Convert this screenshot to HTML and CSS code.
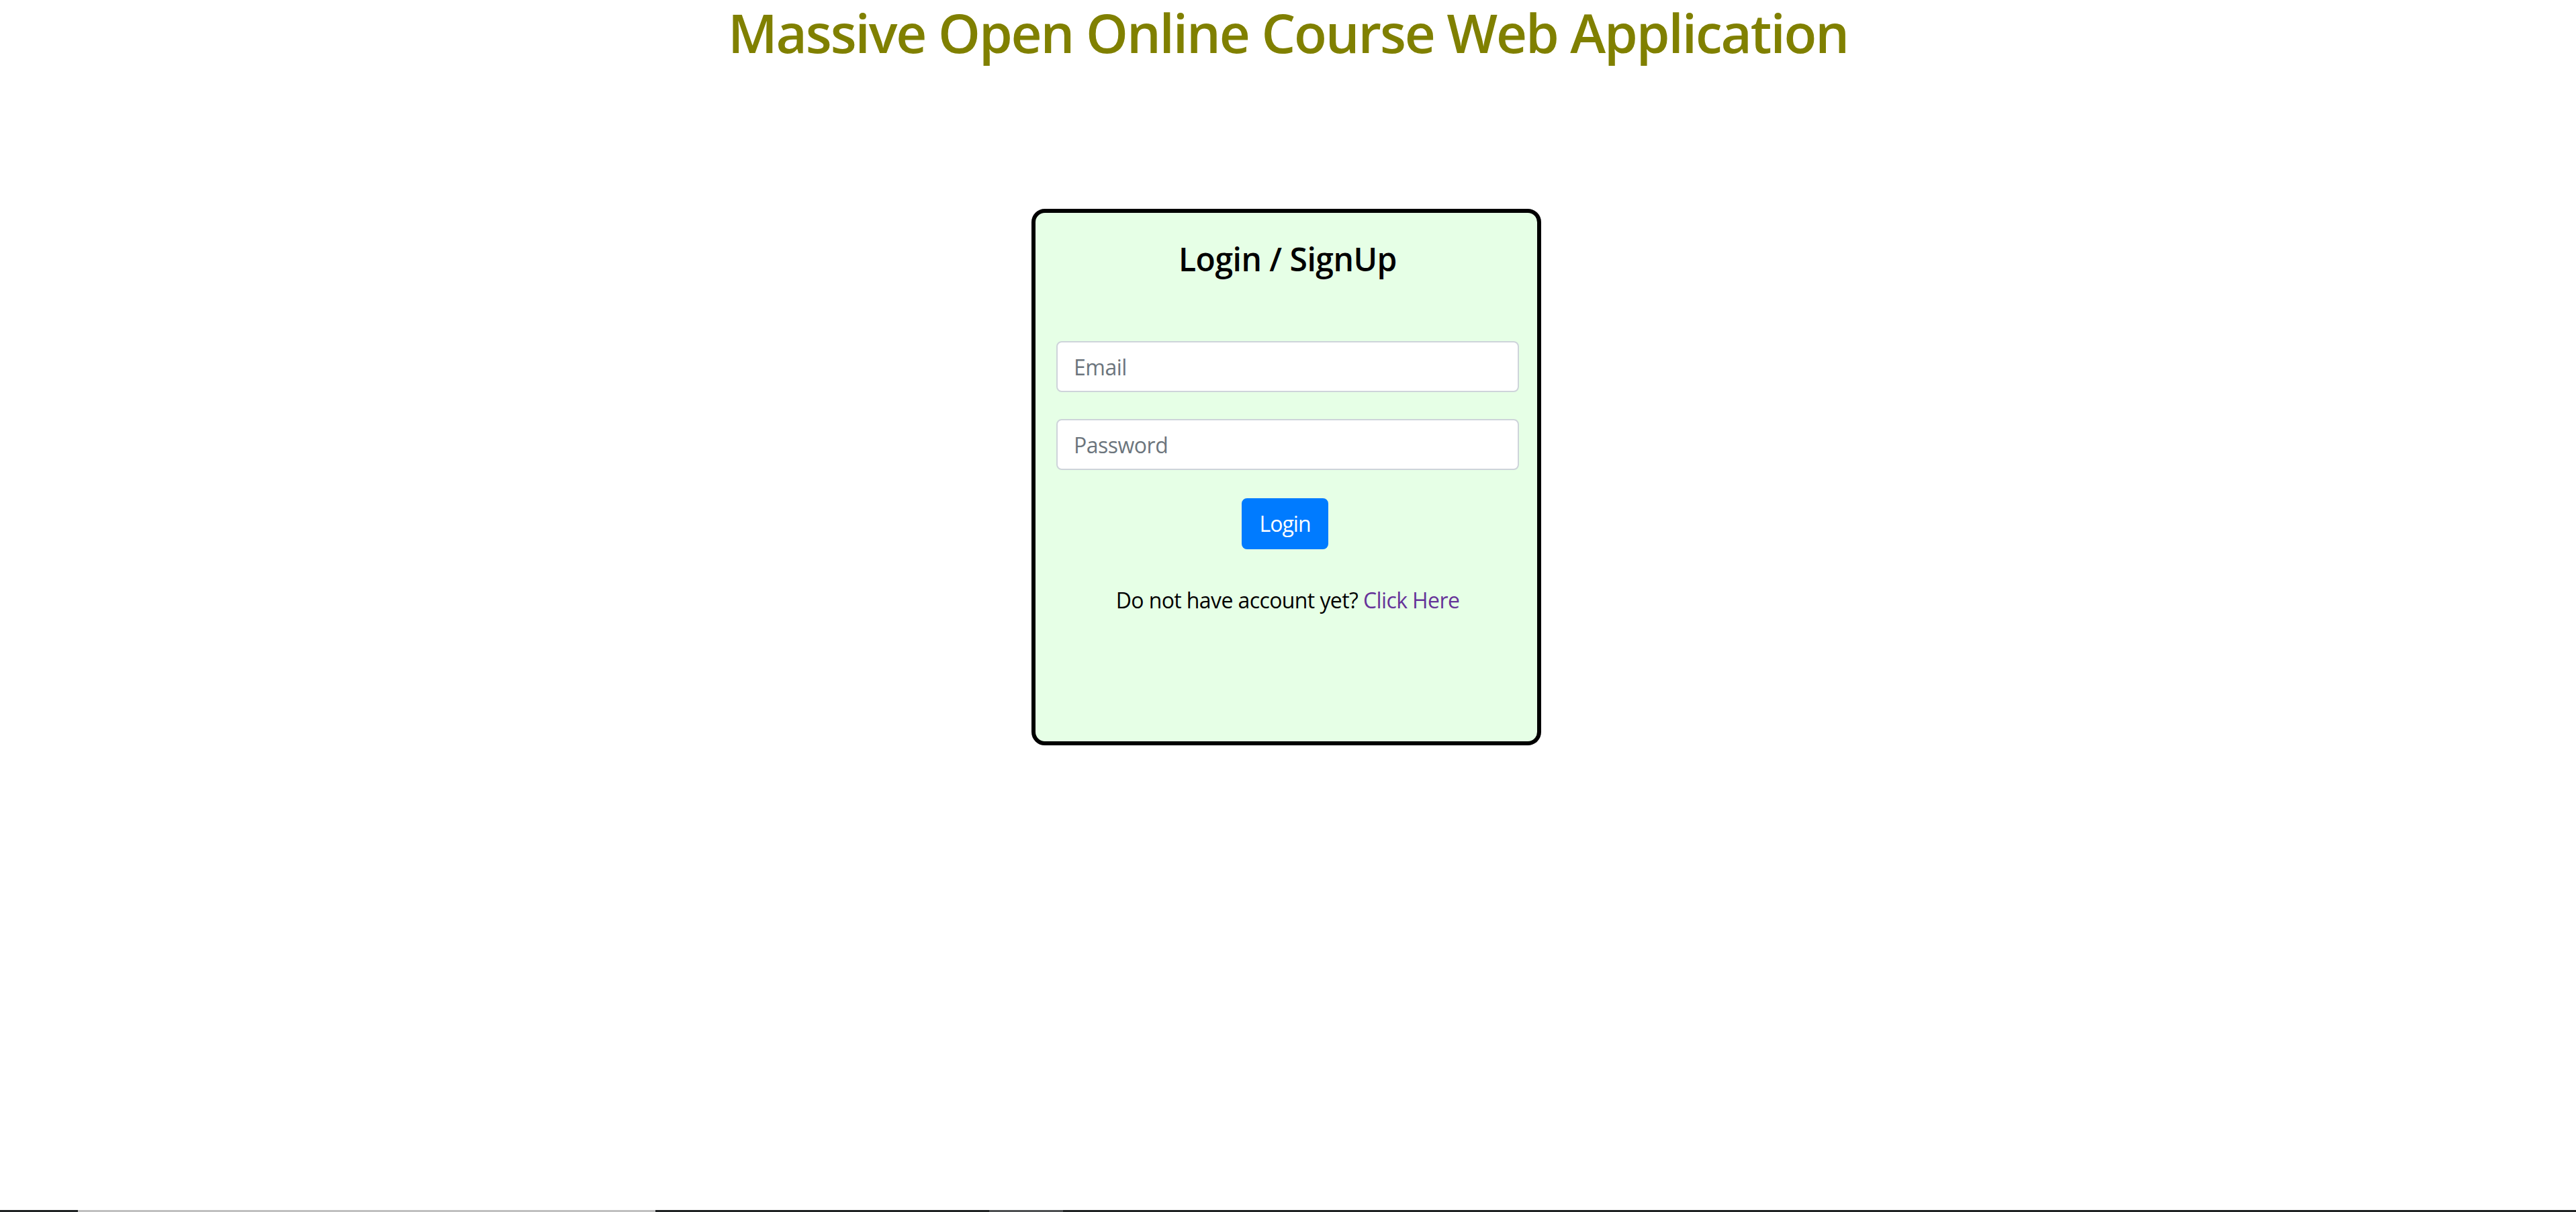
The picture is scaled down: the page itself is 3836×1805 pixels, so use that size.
FILE: index.html
```html
<!DOCTYPE html>
<html lang="en">
<head>
<meta charset="utf-8">
<title>MOOC Web Application</title>
<link rel="stylesheet" href="styles.css">
</head>
<body>
<div class="page">
  <h1 class="title">Massive Open Online Course Web Application</h1>
  <main class="main">
    <form class="card">
      <h4 class="card-title">Login / SignUp</h4>
      <input class="field" type="email" placeholder="Email">
      <input class="field field-last" type="password" placeholder="Password">
      <button class="btn" type="button">Login</button>
      <p class="note">Do not have account yet? <a class="link" href="#">Click Here</a></p>
    </form>
  </main>
  <div class="strip">
    <span class="seg seg-dark seg-a"></span>
    <span class="seg seg-light seg-b"></span>
    <span class="seg seg-dark seg-c"></span>
    <span class="seg seg-mid seg-d"></span>
    <span class="seg seg-dark seg-e"></span>
  </div>
</div>
</body>
</html>
```
FILE: styles.css
```css
* { box-sizing: border-box; }
html, body { margin: 0; padding: 0; background: #fff; }
body {
  font-family: "Open Sans", "Noto Sans", sans-serif;
  font-size: 32px;
  line-height: 1.5;
  color: #212529;
}
.page {
  min-height: 100vh;
  display: flex;
  flex-direction: column;
}
.title {
  margin: 0 0 16px;
  font-size: 80px;
  line-height: 96px;
  font-weight: 600;
  letter-spacing: -2.1px;
  color: #808000;
  text-align: center;
}
.main {
  flex: 1;
  display: flex;
  justify-content: center;
  align-items: flex-start;
  padding-top: 199px;
  padding-right: 5px;
}
.card {
  width: 759px;
  height: 799px;
  border: 6px solid #000;
  border-radius: 20px;
  background: #e6ffe6;
  padding: 40px 27px 0 31px;
  display: flex;
  flex-direction: column;
  align-items: stretch;
}
.card-title {
  margin: 0 0 93px;
  font-size: 48px;
  line-height: 58px;
  font-weight: 600;
  letter-spacing: -0.5px;
  color: #000;
  text-align: center;
}
.field {
  display: block;
  width: 100%;
  height: 76px;
  padding: 12px 24px;
  font-family: inherit;
  font-size: 32px;
  line-height: 48px;
  letter-spacing: -0.5px;
  color: #495057;
  background: #fff;
  border: 2px solid #ced4da;
  border-radius: 8px;
  margin: 0 0 40px;
  outline: none;
}
.field::placeholder { color: #6c757d; opacity: 1; }
.field-last { margin-bottom: 42px; }
.btn {
  align-self: center;
  margin-right: 8px;
  height: 76px;
  padding: 12px 24px;
  font-family: inherit;
  font-size: 32px;
  line-height: 48px;
  letter-spacing: -1px;
  color: #fff;
  background: #007bff;
  border: 2px solid #007bff;
  border-radius: 8px;
  cursor: pointer;
}
.note {
  margin: 52px 0 0;
  text-align: center;
  color: #000;
  font-size: 32px;
  line-height: 48px;
  letter-spacing: -0.6px;
}
.link { color: #663399; text-decoration: none; }
.strip {
  display: flex;
  height: 3px;
}
.seg { display: block; height: 3px; }
.seg-dark { background: #202324; }
.seg-light { background: #c0c0c0; }
.seg-mid { background: #4e5153; }
.seg-a { width: 116px; }
.seg-b { width: 860px; }
.seg-c { width: 497px; }
.seg-d { width: 110px; }
.seg-e { flex: 1; }
```
